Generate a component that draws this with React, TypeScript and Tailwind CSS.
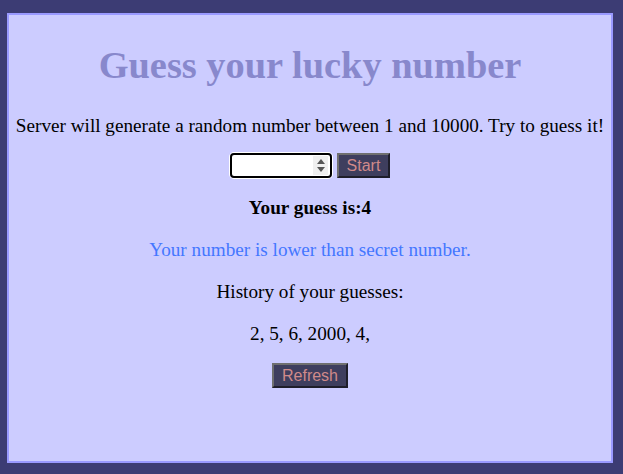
import { useState } from 'react'

const serif = { fontFamily: '"Liberation Serif", "Times New Roman", serif' }

function Spinner() {
  return (
    <span className="flex h-[19px] w-[15px] flex-col items-center justify-center gap-[3px] bg-[#efefef]">
      <svg width="8" height="5" viewBox="0 0 8 5"><path d="M0 5 L4 0 L8 5 Z" fill="#555" /></svg>
      <svg width="8" height="5" viewBox="0 0 8 5"><path d="M0 0 L4 5 L8 0 Z" fill="#555" /></svg>
    </span>
  )
}

function OldButton({ children, className = '' }: { children: React.ReactNode; className?: string }) {
  return (
    <button
      className={`h-[25px] border-2 border-t-[#6f6f6f] border-l-[#6f6f6f] border-b-[#1e1e2a] border-r-[#1e1e2a] bg-[#3e3e5e] text-[16px] leading-none text-[#d08a8a] ${className}`}
      style={{ fontFamily: '"Liberation Sans", Arial, sans-serif' }}
    >
      {children}
    </button>
  )
}

export default function App() {
  const [guess] = useState(4)
  const history = [2, 5, 6, 2000, 4]

  return (
    <div className="h-[474px] w-[623px] bg-[#3c3c74] pl-[7px] pt-[13px]" style={serif}>
      <div className="flex h-[450px] w-[606px] flex-col items-center border-2 border-[#9999ff] bg-[#ccccff] text-center text-[19.2px] text-black">
        <h1 className="mt-[28px] whitespace-nowrap text-[38.4px] font-bold leading-[44px] text-[#8888cc]">Guess your lucky number</h1>
        <p className="mt-[28px] whitespace-nowrap leading-[22px]">Server will generate a random number between 1 and 10000. Try to guess it!</p>

        <div className="mt-[16px] flex items-center gap-[5px]">
          <div className="rounded-[4px] ring-1 ring-white">
            <div className="flex h-[25px] w-[102px] items-center justify-end rounded-[4px] border-2 border-black bg-white pr-[2px]">
              <Spinner />
            </div>
          </div>
          <OldButton className="w-[53px]">Start</OldButton>
        </div>

        <p className="mt-[19px] font-bold leading-[22px]">Your guess is:{guess}</p>
        <p className="mt-[20px] leading-[22px] text-[#4477ff]">Your number is lower than secret number.</p>
        <p className="mt-[20px] leading-[22px]">History of your guesses:</p>
        <p className="mt-[20px] leading-[22px]">{history.map(h => `${h}, `).join('')}</p>

        <OldButton className="mt-[18px] w-[76px]">Refresh</OldButton>
      </div>
    </div>
  )
}
